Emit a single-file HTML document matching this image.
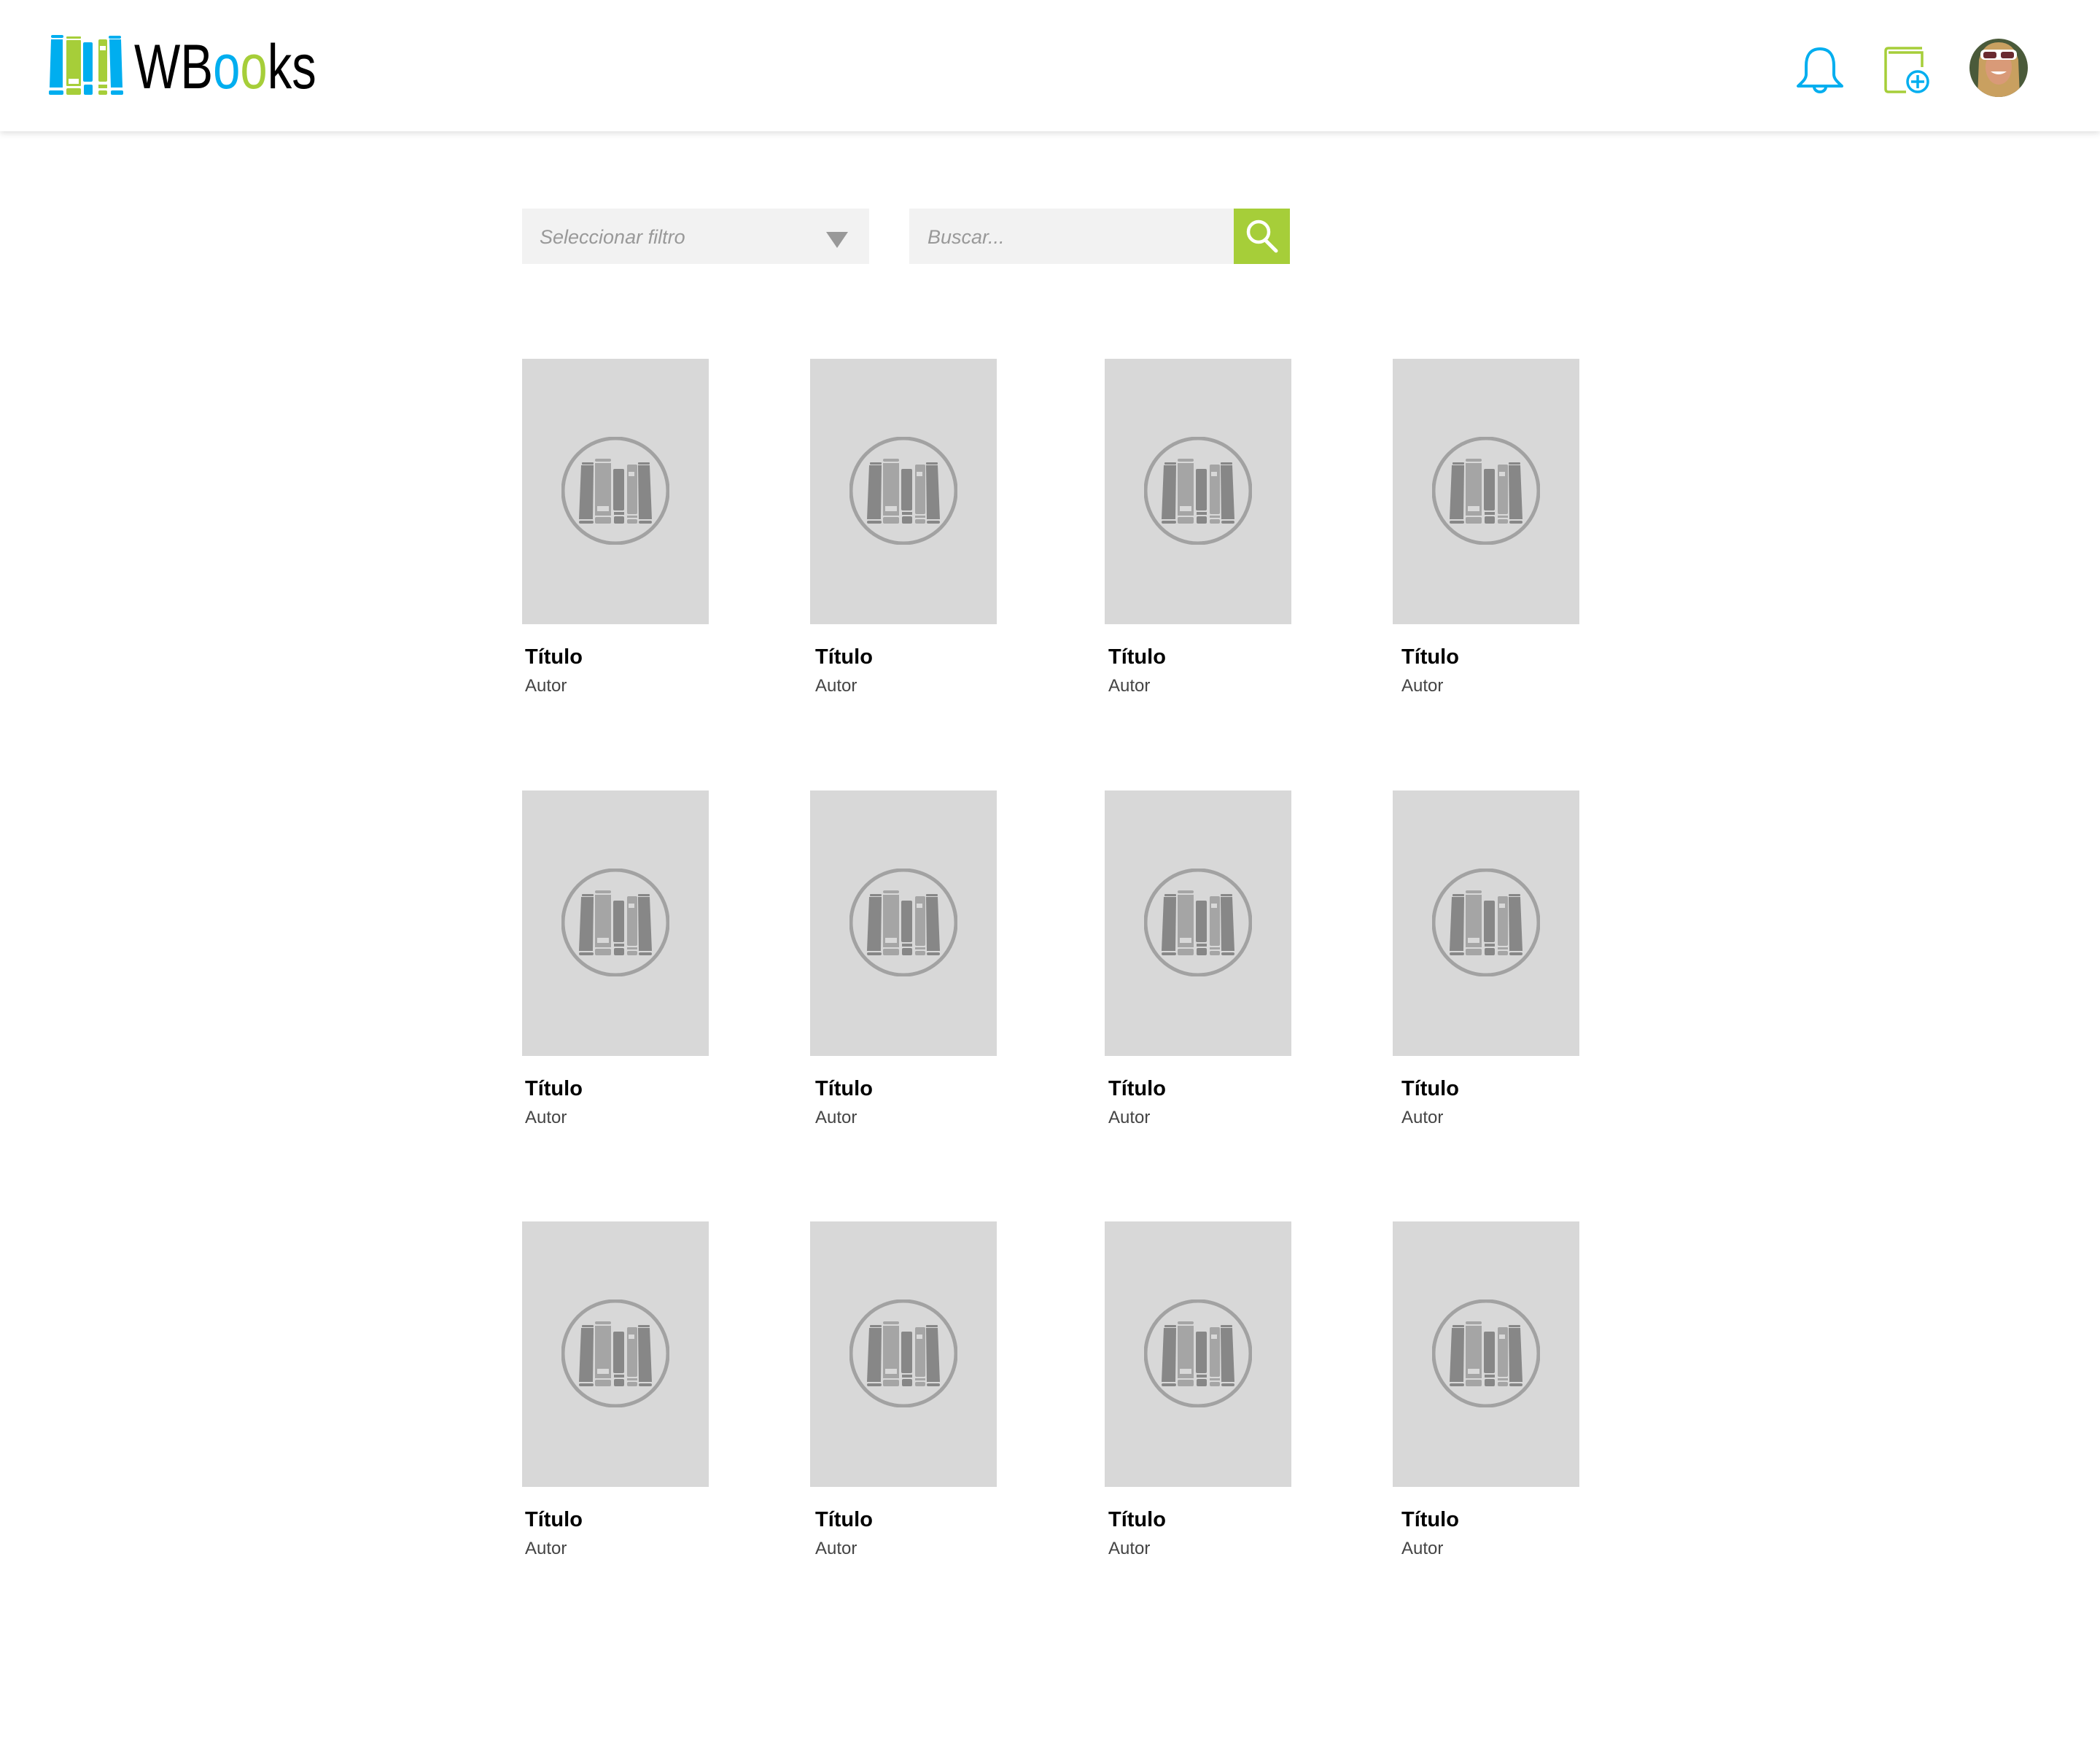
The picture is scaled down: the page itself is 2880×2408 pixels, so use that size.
<!DOCTYPE html>
<html><head><meta charset="utf-8"><style>
*{margin:0;padding:0;box-sizing:border-box}
body{width:2880px;height:2408px;background:#fff;position:relative;font-family:"Liberation Sans",Roboto,sans-serif;overflow:hidden}
.hdr{position:absolute;left:0;top:0;width:2880px;height:180px;background:#fff;box-shadow:0 3px 8px rgba(0,0,0,.12);z-index:2}
.abs{position:absolute}
.card{position:absolute;width:256px}
.cover{width:256px;height:364px;background:#d8d8d8;position:relative}
.cover svg{position:absolute;left:54px;top:107px}
.t{position:absolute;left:4px;top:393px;font-size:29px;font-weight:bold;color:#000}
.a{position:absolute;left:4px;top:435px;font-size:24px;color:#444}
.c2 .t,.c2 .a{left:7px}
.c3 .t,.c3 .a{left:5px}
.c4 .t,.c4 .a{left:12px}
</style></head><body>
<div class="hdr">
<svg class="abs" style="left:66px;top:44px" width="106" height="88" viewBox="0 0 106 88">
<g fill="#00aeef"><path d="M4 10 L20 10 L20 76 L2 76 Z"/><rect x="1" y="80" width="20" height="6" rx="2"/><rect x="4" y="4" width="17" height="4" rx="2"/>
<rect x="48" y="14" width="13" height="54" rx="2"/><rect x="49" y="72" width="12" height="14" rx="2"/>
<path d="M84 10 L100 10 L102 76 L86 76 Z"/><rect x="86" y="80" width="17" height="6" rx="2"/><rect x="83" y="5" width="17" height="4" rx="2"/></g>
<g fill="#a6ce39"><rect x="25" y="6" width="20" height="3" rx="1"/><rect x="25" y="11" width="20" height="63" rx="1"/><rect x="25" y="77" width="20" height="9" rx="2"/>
<rect x="69" y="10" width="12" height="58" rx="2"/><rect x="69" y="72" width="12" height="5"/><rect x="69" y="80" width="12" height="6" rx="2"/></g>
<rect x="28" y="64" width="14" height="7" fill="#fff"/><rect x="71" y="19" width="8" height="6" fill="#fff"/>
</svg>
<div class="abs" style="left:184px;top:42px;font-size:86px;line-height:100px;font-family:'Liberation Sans',sans-serif;color:#000;transform:scaleX(0.78);transform-origin:0 0;white-space:nowrap">WB<span style="color:#00aeef">o</span><span style="color:#a6ce39">o</span>ks</div>
<svg class="abs" style="left:2462px;top:62px" width="68" height="66" viewBox="0 0 68 66"><path d="M34 5 C20 5 15 15 15 28 L15 40 C15 47 8 52 4 56 L64 56 C60 52 53 47 53 40 L53 28 C53 15 48 5 34 5 Z M26 57 A8 7 0 0 0 42 57" fill="none" stroke="#00aeef" stroke-width="4" stroke-linejoin="round"/></svg>
<svg class="abs" style="left:2582px;top:62px" width="64" height="68" viewBox="0 0 64 68"><g fill="none" stroke="#a6ce39" stroke-width="3.5"><path d="M54 4 L8 4 Q4 4 4 8 L4 60 Q4 64 8 64 L32 64"/><path d="M8 10 L54 10 L54 30"/></g><circle cx="48" cy="50" r="14" fill="#fff" stroke="#00aeef" stroke-width="3.5"/><path d="M48 41 V59 M39 50 H57" stroke="#00aeef" stroke-width="3.5"/></svg>
<svg class="abs" style="left:2700px;top:52px" width="82" height="82" viewBox="0 0 82 82"><defs><clipPath id="c"><circle cx="41" cy="41" r="40"/></clipPath></defs><g clip-path="url(#c)"><rect width="82" height="82" fill="#4a5a3a"/><path d="M12 82 L14 30 Q20 6 41 6 Q62 6 68 30 L70 82 Z" fill="#c9a060"/><ellipse cx="41" cy="40" rx="18" ry="24" fill="#d99a78"/><rect x="16" y="16" width="50" height="14" rx="6" fill="#fff"/><rect x="20" y="19" width="18" height="9" rx="3" fill="#6a2a30"/><rect x="44" y="19" width="18" height="9" rx="3" fill="#6a2a30"/><path d="M30 46 Q41 54 52 46" fill="#fff"/></g></svg>
</div>
<div class="abs" style="left:716px;top:286px;width:476px;height:76px;background:#f2f2f2"></div>
<div class="abs" style="left:740px;top:310px;font-size:27px;font-style:italic;color:#999">Seleccionar filtro</div>
<svg class="abs" style="left:1133px;top:318px" width="30" height="22"><path d="M0 0 H30 L15 22 Z" fill="#999"/></svg>
<div class="abs" style="left:1247px;top:286px;width:446px;height:76px;background:#f2f2f2"></div>
<div class="abs" style="left:1272px;top:310px;font-size:27px;font-style:italic;color:#999">Buscar...</div>
<div class="abs" style="left:1692px;top:286px;width:77px;height:76px;background:#a6ce39"></div>
<svg class="abs" style="left:1706px;top:298px" width="52" height="52"><circle cx="20" cy="20" r="14" fill="none" stroke="#fff" stroke-width="4.5"/><path d="M29 31 L44 46" stroke="#fff" stroke-width="5" stroke-linecap="round"/></svg>

<svg width="0" height="0" style="position:absolute"><defs><g id="ic">
<circle cx="74" cy="74" r="72" fill="none" stroke="#a2a2a2" stroke-width="5"/>
<g fill="#878787"><path d="M27 39 L44 39 L43 113 L24 113 Z"/><rect x="24" y="115" width="20" height="4" rx="2"/><rect x="28" y="35" width="16" height="3" rx="1"/>
<rect x="71" y="44" width="15" height="57" rx="2"/><rect x="72" y="103" width="14" height="4"/><rect x="72" y="109" width="14" height="10" rx="2"/>
<path d="M105 39 L121 39 L124 113 L106 113 Z"/><rect x="106" y="115" width="18" height="4" rx="2"/><rect x="105" y="35" width="16" height="3" rx="1"/></g>
<g fill="#a5a5a5"><rect x="46" y="30" width="22" height="4" rx="2"/><rect x="46" y="36" width="22" height="72"/><rect x="46" y="110" width="22" height="9" rx="2"/>
<rect x="90" y="38" width="14" height="68" rx="2"/><rect x="90" y="108" width="14" height="3"/><rect x="90" y="113" width="14" height="6" rx="2"/></g>
<rect x="49" y="95" width="16" height="7" fill="#d8d8d8"/><rect x="92" y="48" width="8" height="6" fill="#d8d8d8"/>
</g></defs></svg>

<div class="card" style="left:716px;top:492px"><div class="cover"><svg width="148" height="148"><use href="#ic"/></svg></div><div class="t">Título</div><div class="a">Autor</div></div>
<div class="card c2" style="left:1111px;top:492px"><div class="cover"><svg width="148" height="148"><use href="#ic"/></svg></div><div class="t">Título</div><div class="a">Autor</div></div>
<div class="card c3" style="left:1515px;top:492px"><div class="cover"><svg width="148" height="148"><use href="#ic"/></svg></div><div class="t">Título</div><div class="a">Autor</div></div>
<div class="card c4" style="left:1910px;top:492px"><div class="cover"><svg width="148" height="148"><use href="#ic"/></svg></div><div class="t">Título</div><div class="a">Autor</div></div>
<div class="card" style="left:716px;top:1084px"><div class="cover"><svg width="148" height="148"><use href="#ic"/></svg></div><div class="t">Título</div><div class="a">Autor</div></div>
<div class="card c2" style="left:1111px;top:1084px"><div class="cover"><svg width="148" height="148"><use href="#ic"/></svg></div><div class="t">Título</div><div class="a">Autor</div></div>
<div class="card c3" style="left:1515px;top:1084px"><div class="cover"><svg width="148" height="148"><use href="#ic"/></svg></div><div class="t">Título</div><div class="a">Autor</div></div>
<div class="card c4" style="left:1910px;top:1084px"><div class="cover"><svg width="148" height="148"><use href="#ic"/></svg></div><div class="t">Título</div><div class="a">Autor</div></div>
<div class="card" style="left:716px;top:1675px"><div class="cover"><svg width="148" height="148"><use href="#ic"/></svg></div><div class="t">Título</div><div class="a">Autor</div></div>
<div class="card c2" style="left:1111px;top:1675px"><div class="cover"><svg width="148" height="148"><use href="#ic"/></svg></div><div class="t">Título</div><div class="a">Autor</div></div>
<div class="card c3" style="left:1515px;top:1675px"><div class="cover"><svg width="148" height="148"><use href="#ic"/></svg></div><div class="t">Título</div><div class="a">Autor</div></div>
<div class="card c4" style="left:1910px;top:1675px"><div class="cover"><svg width="148" height="148"><use href="#ic"/></svg></div><div class="t">Título</div><div class="a">Autor</div></div>
</body></html>
